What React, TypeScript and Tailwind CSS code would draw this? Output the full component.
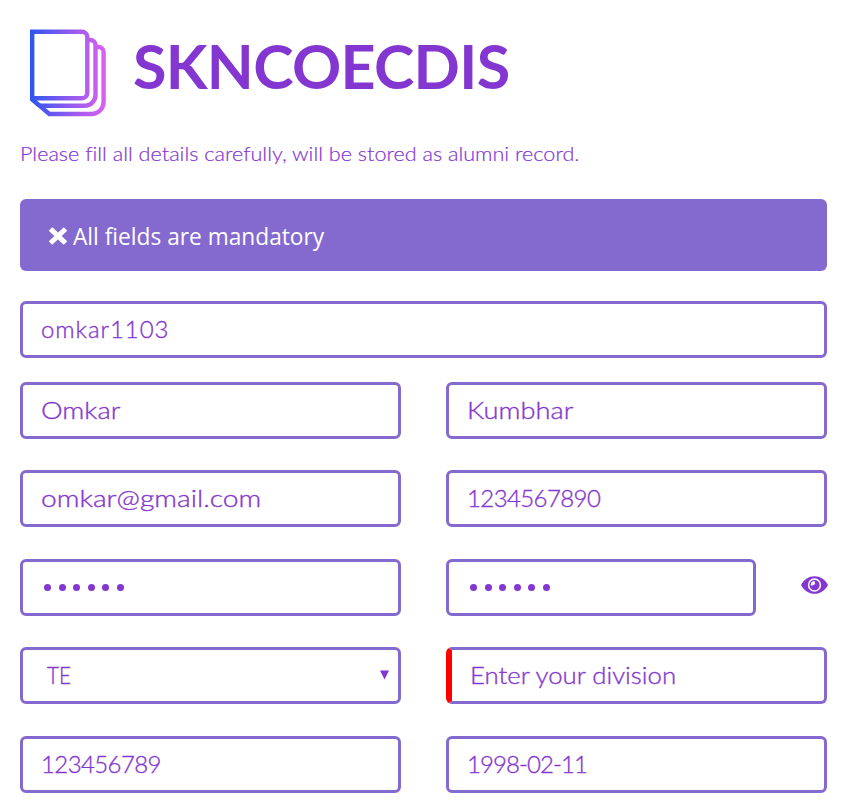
import type { ReactNode } from "react";

function Logo() {
  return (
    <svg width="80" height="92" viewBox="28 27 80 92" fill="none" className="shrink-0">
      <defs>
        <linearGradient id="ink" gradientUnits="userSpaceOnUse" x1="30" y1="0" x2="106" y2="0">
          <stop offset="0" stopColor="#2d55ef" />
          <stop offset="0.5" stopColor="#8d5aef" />
          <stop offset="1" stopColor="#dc60f0" />
        </linearGradient>
      </defs>
      <g stroke="url(#ink)" strokeWidth="4.4">
        <path d="M32.2 31.7H82a5.300 5.300 0 0 1 5.300 5.300V93a5.200 5.200 0 0 1-5.300 5.200H32.2Z" />
        <path d="M89 40h1.500a5 5 0 0 1 5 5V95a10.8 10.8 0 0 1-10.8 10.8H39" />
        <path d="M97 47h1.600a5 5 0 0 1 5 5V102a12 12 0 0 1-12 12H49.3L32 99.2" />
      </g>
      <path d="M30 98v2.300L37 106.500l4.500 1.500L35 98Z" fill="url(#ink)" />
    </svg>
  );
}

function Eye() {
  return (
    <svg width="27" height="18" viewBox="0 0 27 18" className="mb-[5px] ml-[45px] shrink-0">
      <path d="M0 9C3 3.500 8 .2 13.500 .2S24 3.500 27 9c-3 5.500-8 8.800-13.500 8.800S3 14.500 0 9Z" fill="currentColor" />
      <circle cx="13.500" cy="9" r="5.900" fill="none" stroke="white" strokeWidth="1.500" />
      <path d="M13 5.200a4 4 0 0 1-3.200 3.700" fill="none" stroke="white" strokeWidth="1.800" />
      <circle cx="12" cy="7.300" r="1.900" fill="white" />
    </svg>
  );
}

const box = "flex h-[57px] items-center rounded-[6px] border-3 border-[#846acf] pb-[2px] pl-[18px]";

function Field({ children, className = "", text = "" }: { children: ReactNode; className?: string; text?: string }) {
  return (
    <div className={`${box} ${className}`}>
      <span className={`inline-block origin-left whitespace-nowrap [-webkit-text-stroke:0.35px] ${text}`}>{children}</span>
    </div>
  );
}

function Dots() {
  return (
    <span className="flex gap-[7.600px] pt-[2px] pl-[3px]">
      {[0, 1, 2, 3, 4, 5].map((n) => (
        <i key={n} className="size-[7px] rounded-full bg-[#8437d0]" />
      ))}
    </span>
  );
}

export default function App() {
  return (
    <main className="h-[809px] w-[857px] overflow-hidden bg-white pr-[30px] pl-[20px] font-[Lato,sans-serif] text-[24px] leading-[36px] font-light text-[#8437d0] [font-variant-ligatures:none]">
      <header className="flex h-[119px] items-start pt-[27px] pl-[8px]">
        <Logo />
        <h1 className="ml-[25px] text-[61px] leading-[78px] font-bold tracking-[-0.700px]">SKNCOECDIS</h1>
      </header>
      <p className="mt-[21px] h-[28px] w-max origin-left scale-x-[1.137] text-[19px] leading-[28px] [-webkit-text-stroke:0.2px]">
        Please fill all details carefully, will be stored as alumni record.
      </p>
      <div className="mt-[31px] flex h-[72px] items-center rounded-[6px] bg-[#846acf] pl-[28px] font-['Open_Sans',sans-serif] font-normal text-white">
        <svg width="20" height="18" viewBox="0 0 20 18" className="mt-[2px] shrink-0">
          <path d="M4.300 3.700 15.700 14.300M15.700 3.700 4.300 14.300" stroke="currentColor" strokeWidth="5" strokeLinecap="square" />
        </svg>
        <span className="mt-[2px] ml-[5px] origin-left scale-x-[0.946]">All fields are mandatory</span>
      </div>

      <form className="mt-[30px]">
        <Field text="tracking-[0.950px]">omkar1103</Field>
        <div className="mt-[24px] grid grid-cols-[381px_381px] justify-between">
          <Field text="scale-x-[1.140]">Omkar</Field>
          <Field text="scale-x-[1.135]">Kumbhar</Field>
        </div>
        <div className="mt-[31px] grid grid-cols-[381px_381px] justify-between">
          <Field text="scale-x-[1.176]">omkar@gmail.com</Field>
          <Field text="tracking-[-0.600px]">1234567890</Field>
        </div>
        <div className="mt-[32px] grid grid-cols-[381px_381px] justify-between">
          <Field><Dots /></Field>
          <div className="flex items-center">
            <Field className="w-[310px] shrink-0"><Dots /></Field>
            <Eye />
          </div>
        </div>
        <div className="mt-[31px] grid grid-cols-[381px_381px] justify-between">
          <div className={`${box} justify-between pr-[9px]`}>
            <span className="ml-[6px] origin-left scale-x-[0.860] [-webkit-text-stroke:0.35px]">TE</span>
            <svg width="9" height="10" viewBox="0 0 9 10">
              <path d="M0 .5h9L4.500 9.500Z" fill="currentColor" />
            </svg>
          </div>
          <Field className="border-l-6 border-l-[#ff0000]" text="scale-x-[1.073]">Enter your division</Field>
        </div>
        <div className="mt-[32px] grid grid-cols-[381px_381px] justify-between">
          <Field text="tracking-[-0.600px]">123456789</Field>
          <Field text="tracking-[-0.900px]">1998-02-11</Field>
        </div>
      </form>
    </main>
  );
}
